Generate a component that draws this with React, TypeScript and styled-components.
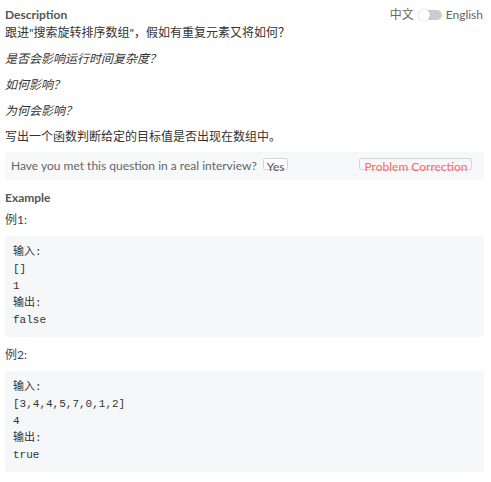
import React from "react";
import styled, { createGlobalStyle } from "styled-components";

const Global = createGlobalStyle`
  html, body { margin: 0; padding: 0; background: #fff; }
  body {
    font-family: Lato, "Noto Sans CJK SC", sans-serif;
    font-size: 12px;
    color: #333;
  }
`;

const Page = styled.div`
  padding: 6px 7px 0 5px;
`;

const Header = styled.div`
  display: flex;
  justify-content: space-between;
  align-items: flex-start;
`;

const Title = styled.div`
  font-weight: 700;
  color: #555;
  font-size: 12px;
  line-height: 18px;
`;

const LangSwitch = styled.div`
  display: flex;
  align-items: center;
  gap: 4px;
  color: #666;
  font-size: 12px;
  line-height: 18px;
  margin-right: 1px;
`;

const Track = styled.span`
  position: relative;
  display: inline-block;
  width: 24px;
  height: 10px;
  border-radius: 5px;
  background: #ccc;
`;

const Knob = styled.span`
  position: absolute;
  left: 0;
  top: -1px;
  width: 12px;
  height: 12px;
  border-radius: 50%;
  background: #fff;
  box-shadow: 0 0 1px rgba(0, 0, 0, 0.35);
`;

const Para = styled.p<{ $italic?: boolean; $first?: boolean }>`
  margin: ${(p) => (p.$first ? "0" : "8px")} 0 0;
  line-height: 18px;
  font-style: ${(p) => (p.$italic ? "italic" : "normal")};
`;

const Bar = styled.div`
  display: flex;
  align-items: flex-start;
  background: #f7f8fa;
  height: 28px;
  padding-left: 6px;
  color: #666;
  margin-top: 6px;
  white-space: nowrap;
`;

const BarText = styled.span`
  line-height: 28px;
`;

const SmallBtn = styled.span<{ $danger?: boolean }>`
  display: inline-block;
  box-sizing: border-box;
  height: 12px;
  line-height: 16px;
  border: 1px solid #d6d6d6;
  border-radius: 2px;
  padding: 0 4px;
  margin-top: 6px;
  color: ${(p) => (p.$danger ? "#f66" : "#555")};
  background: ${(p) => (p.$danger ? "#f7f8fa" : "#fff")};
`;

const YesBtn = styled(SmallBtn)`
  margin-left: 6px;
  padding: 0 3px;
`;

const CorrectionBtn = styled(SmallBtn)`
  margin-left: 71px;
`;

const SubTitle = styled.div`
  font-weight: 700;
  color: #555;
  line-height: 18px;
  margin-top: 9px;
`;

const ExLabel = styled.div<{ $gap?: number }>`
  line-height: 18px;
  margin-top: ${(p) => p.$gap ?? 4}px;
  color: #444;
`;

const Code = styled.pre`
  margin: 7px 0 0;
  background: #f6f7f9;
  padding: 8px;
  font-family: "Liberation Mono", "Noto Sans CJK SC", monospace;
  font-size: 11px;
  line-height: 17px;
  color: #333;
  border-radius: 2px;
`;

export default function App() {
  return (
    <>
      <Global />
      <Page>
        <Header>
          <Title>Description</Title>
          <LangSwitch>
            <span>中文</span>
            <Track>
              <Knob />
            </Track>
            <span>English</span>
          </LangSwitch>
        </Header>
        <Para $first>跟进"搜索旋转排序数组"，假如有重复元素又将如何？</Para>
        <Para $italic>是否会影响运行时间复杂度？</Para>
        <Para $italic>如何影响？</Para>
        <Para $italic>为何会影响？</Para>
        <Para>写出一个函数判断给定的目标值是否出现在数组中。</Para>
        <Bar>
          <BarText>Have you met this question in a real interview?</BarText>
          <YesBtn>Yes</YesBtn>
          <CorrectionBtn $danger>Problem Correction</CorrectionBtn>
        </Bar>
        <SubTitle>Example</SubTitle>
        <ExLabel>例1:</ExLabel>
        <Code>{"输入:\n[]\n1\n输出:\nfalse"}</Code>
        <ExLabel $gap={9}>例2:</ExLabel>
        <Code>{"输入:\n[3,4,4,5,7,0,1,2]\n4\n输出:\ntrue"}</Code>
      </Page>
    </>
  );
}
